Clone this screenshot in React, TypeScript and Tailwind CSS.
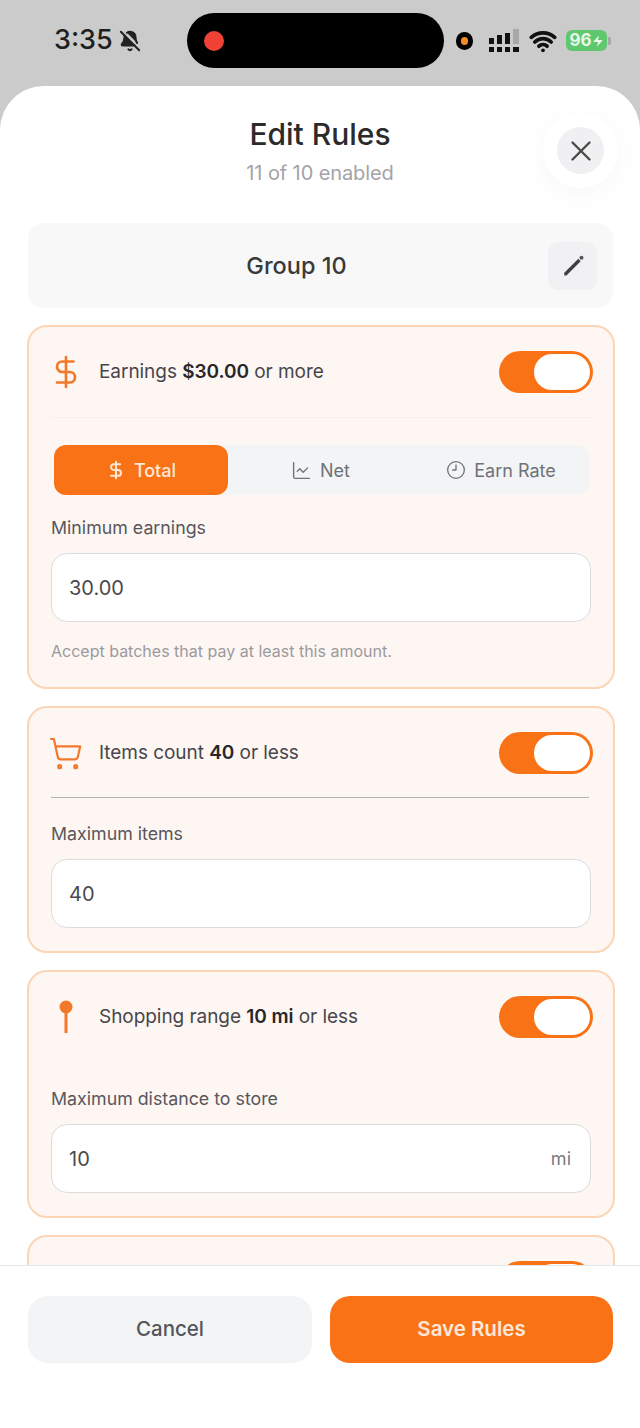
import React from "react";
import {
  BellOff,
  ChartLine,
  Clock9,
  DollarSign,
  ShoppingCart,
  Wifi,
  X,
  Zap,
} from "lucide-react";

const Toggle: React.FC = () => (
  <div className="flex h-[42px] w-[94px] items-center justify-end rounded-full bg-[#f97316] p-[3px]">
    <div className="h-[36px] w-[56px] rounded-full bg-white" />
  </div>
);

const Field: React.FC<{ label: string; value: string; unit?: string }> = ({
  label,
  value,
  unit,
}) => (
  <div>
    <p className="text-[17.8px] leading-[24px] text-[#57575c]">{label}</p>
    <div className="mt-[13px] flex h-[69px] items-center justify-between rounded-[16px] border border-[#dcdcdf] bg-white px-[17px]">
      <span className="text-[20px] text-[#4a4a4a]">{value}</span>
      {unit && <span className="pr-[2px] text-[18px] text-[#7a7a80]">{unit}</span>}
    </div>
  </div>
);

const Card: React.FC<{ className?: string; children: React.ReactNode }> = ({
  className,
  children,
}) => (
  <div
    className={`rounded-[20px] border-2 border-[#fbd5b5] bg-[#fef6f2] px-[22px] ${className ?? ""}`}
  >
    {children}
  </div>
);

const RuleHead: React.FC<{ icon: React.ReactNode; children: React.ReactNode }> = ({
  icon,
  children,
}) => (
  <div className="flex h-[42px] items-center justify-between">
    <div className="flex items-center">
      <div className="flex w-[48px] items-center pl-[1px] text-[#f2792b]">{icon}</div>
      <p className="text-[19px] tracking-[-0.05px] text-[#46464c]">{children}</p>
    </div>
    <div className="-mr-[2px]">
      <Toggle />
    </div>
  </div>
);

const SignalBars: React.FC = () => (
  <div className="flex items-end gap-[3px]">
    <div className="flex flex-col gap-[3px]">
      <div className="h-[6px] w-[5px] bg-[#111]" />
      <div className="h-[5px] w-[5px] bg-[#111]" />
    </div>
    <div className="flex flex-col gap-[3px]">
      <div className="h-[9px] w-[5px] bg-[#111]" />
      <div className="h-[5px] w-[5px] bg-[#111]" />
    </div>
    <div className="flex flex-col gap-[3px]">
      <div className="h-[11px] w-[5px] bg-[#111]" />
      <div className="h-[5px] w-[5px] bg-[#111]" />
    </div>
    <div className="flex flex-col gap-[3px]">
      <div className="h-[15px] w-[6px] bg-[#a8a8a8]" />
      <div className="h-[5px] w-[6px] bg-[#111]" />
    </div>
  </div>
);

const StatusBar: React.FC = () => (
  <div className="flex h-[86px] shrink-0 items-start bg-[#cbcbcb] pl-[54px] pt-[13px]">
    <div className="flex h-[55px] w-[133px] items-center">
      <span className="text-[27px] font-medium text-[#1f1f1f]">3:35</span>
      <BellOff
        size={22}
        strokeWidth={2.2}
        fill="#222"
        className="ml-[6px] text-[#222]"
      />
    </div>
    <div className="flex h-[55px] w-[257px] items-center rounded-full bg-black pl-[17px]">
      <div className="h-[20px] w-[20px] rounded-full bg-[#ef4136]" />
    </div>
    <div className="ml-[12px] flex h-[55px] items-center">
      <div className="flex h-[18px] w-[17px] items-center justify-center rounded-full bg-black">
        <div className="h-[8px] w-[7px] rounded-full bg-[#f28c28]" />
      </div>
      <div className="ml-[16px]">
        <SignalBars />
      </div>
      <Wifi size={28} strokeWidth={3.2} className="ml-[10px] text-[#111]" />
      <div className="ml-[9px] flex h-[21px] w-[41px] items-center justify-center rounded-[6px] bg-[#5fc86f] text-[17px] leading-none font-bold text-[#e6f7e8]">
        96
        <Zap size={12} fill="#e6f7e8" strokeWidth={0} />
      </div>
      <div className="ml-[1px] h-[8px] w-[3px] rounded-r-[2px] bg-[#a8a8a8]" />
    </div>
  </div>
);

export default function App() {
  return (
    <div className="relative flex h-[1428px] w-[640px] flex-col overflow-hidden bg-[#cbcbcb] font-['Inter',sans-serif]">
      <StatusBar />

      <div className="flex min-h-0 flex-1 flex-col rounded-t-[44px] bg-white">
        <div className="flex h-[137px] shrink-0 flex-col items-center pt-[28px]">
          <h1 className="text-[30px] leading-[40px] font-medium text-[#2b2b2b]">Edit Rules</h1>
          <p className="mt-[7px] text-[20px] leading-[24px] tracking-[-0.1px] text-[#a3a3a8]">
            11 of 10 enabled
          </p>
        </div>

        <div className="min-h-0 flex-1 overflow-hidden pl-[27px] pr-[25px]">
          <div className="ml-[1px] mr-[2px] flex h-[85px] items-center rounded-[16px] bg-[#f8f8f9] pr-[16px]">
            <p className="flex-1 pl-[17px] text-center text-[23.5px] font-medium text-[#3a3a3a]">
              Group 10
            </p>
            <div className="flex h-[48px] w-[49px] items-center justify-center rounded-[10px] bg-[#f1f1f3]">
              <svg width="24" height="24" viewBox="0 0 24 24" fill="none">
                <path d="M4 20.5 L18.5 6" stroke="#3f3f46" strokeWidth="3.4" />
                <path d="M3 22 L4.2 18.8 L6 20.6 Z" fill="#3f3f46" />
                <circle cx="20.5" cy="3.8" r="2" fill="#55555b" />
              </svg>
            </div>
          </div>

          <Card className="mt-[17px] h-[364px] pt-[24px]">
            <RuleHead icon={<DollarSign size={36} strokeWidth={1.8} className="-ml-[4px]" />}>
              Earnings <span className="font-semibold text-[#27272a]">$30.00</span> or more
            </RuleHead>
            <div className="mt-[24px] h-px bg-[#f9eee8]" />
            <div className="ml-[3px] mr-[2px] mt-[27px] flex h-[50px] rounded-[12px] bg-[#f3f4f6]">
              <div className="flex h-[50px] w-[174px] items-center justify-center gap-[8px] rounded-[12px] bg-[#f97316] text-[18px] font-medium text-[#fde8d8]">
                <DollarSign size={20} strokeWidth={2.4} />
                Total
              </div>
              <div className="flex flex-1 items-center justify-center gap-[8px] text-[18px] text-[#6f7278]">
                <ChartLine size={21} strokeWidth={1.6} />
                Net
              </div>
              <div className="flex w-[176px] items-center justify-center gap-[8px] text-[18px] text-[#6f7278]">
                <Clock9 size={20} strokeWidth={1.6} />
                Earn Rate
              </div>
            </div>
            <div className="mt-[21px]">
              <Field label="Minimum earnings" value="30.00" />
            </div>
            <p className="mt-[18px] text-[16px] leading-[22px] text-[#9a9a9e]">
              Accept batches that pay at least this amount.
            </p>
          </Card>

          <Card className="mt-[17px] h-[247px] pt-[24px]">
            <RuleHead icon={<ShoppingCart size={35} strokeWidth={1.5} className="-ml-[4px]" />}>
              Items count <span className="font-semibold text-[#27272a]">40</span> or less
            </RuleHead>
            <div className="mr-[2px] mt-[23px] h-px bg-[#b5b5b5]" />
            <div className="mt-[24px]">
              <Field label="Maximum items" value="40" />
            </div>
          </Card>

          <Card className="mt-[17px] h-[248px] pt-[24px]">
            <RuleHead
              icon={
                <svg width="18" height="34" viewBox="0 0 18 34" className="ml-[5px]">
                  <circle cx="9" cy="7" r="6.5" fill="#f2792b" />
                  <path d="M9 12v21" stroke="#f2792b" strokeWidth="3" />
                </svg>
              }
            >
              Shopping range <span className="font-semibold text-[#27272a]">10 mi</span> or less
            </RuleHead>
            <div className="mt-[49px]">
              <Field label="Maximum distance to store" value="10" unit="mi" />
            </div>
          </Card>

          <Card className="mt-[17px] h-[120px] pt-[24px]">
            <RuleHead icon={null}>
              <span />
            </RuleHead>
          </Card>
        </div>

        <div className="flex h-[163px] shrink-0 gap-[18px] border-t border-[#e5e7eb] bg-white pl-[28px] pr-[27px] pt-[30px]">
          <button
            type="button"
            className="h-[67px] w-[284px] rounded-[20px] bg-[#f3f4f6] text-[20.5px] font-medium text-[#55555b]"
          >
            Cancel
          </button>
          <button
            type="button"
            className="h-[67px] flex-1 rounded-[20px] bg-[#f97316] text-[20.5px] font-semibold text-[#fde8d8]"
          >
            Save Rules
          </button>
        </div>
      </div>

      <div className="absolute left-[543px] top-[113px] flex h-[75px] w-[75px] items-center justify-center rounded-full bg-white shadow-[0_6px_28px_rgba(0,0,0,0.035)]">
        <div className="flex h-[47px] w-[47px] items-center justify-center rounded-full bg-[#f0f0f2]">
          <X size={34} strokeWidth={1.7} className="text-[#4b4b4b]" />
        </div>
      </div>
    </div>
  );
}
